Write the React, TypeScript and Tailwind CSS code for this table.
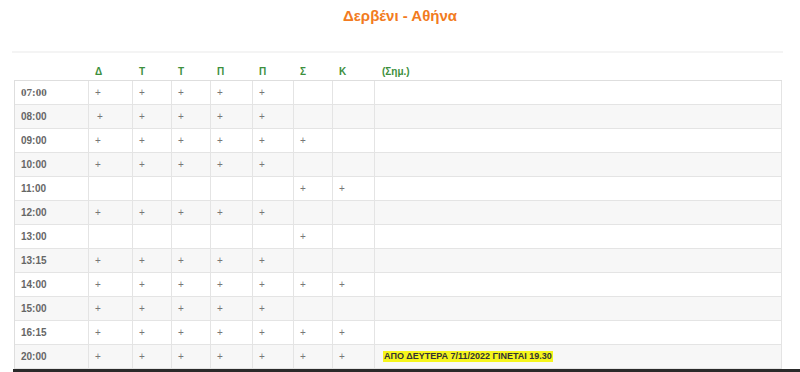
import React from 'react';

const days = ['Δ', 'Τ', 'Τ', 'Π', 'Π', 'Σ', 'Κ'];

const rows: { time: string; marks: boolean[]; note?: string }[] = [
  { time: '07:00', marks: [true, true, true, true, true, false, false] },
  { time: '08:00', marks: [true, true, true, true, true, false, false] },
  { time: '09:00', marks: [true, true, true, true, true, true, false] },
  { time: '10:00', marks: [true, true, true, true, true, false, false] },
  { time: '11:00', marks: [false, false, false, false, false, true, true] },
  { time: '12:00', marks: [true, true, true, true, true, false, false] },
  { time: '13:00', marks: [false, false, false, false, false, true, false] },
  { time: '13:15', marks: [true, true, true, true, true, false, false] },
  { time: '14:00', marks: [true, true, true, true, true, true, true] },
  { time: '15:00', marks: [true, true, true, true, true, false, false] },
  { time: '16:15', marks: [true, true, true, true, true, true, true] },
  {
    time: '20:00',
    marks: [true, true, true, true, true, true, true],
    note: 'ΑΠΟ ΔΕΥΤΕΡΑ 7/11/2022 ΓΙΝΕΤΑΙ 19.30',
  },
];

const gridCols = 'grid grid-cols-[74px_44px_39px_39px_42px_41px_39px_42px_1fr]';

const App: React.FC = () => {
  return (
    <div className="w-[800px] h-[372px] bg-white overflow-hidden font-['Liberation_Sans',Arial,sans-serif]">
      {/* Title */}
      <h1 className="pt-[7px] h-[30px] text-center text-[15px] font-bold text-[#f27b21] leading-[18px]">
        Δερβένι - Αθήνα
      </h1>

      <div className="mt-[21px] mx-[12px] w-[771px] h-[2px] bg-[#f4f4f4]" />

      {/* Header */}
      <div className={`${gridCols} ml-[14px] w-[768px] mt-[13px] h-[12px] items-end`}>
        <div />
        {days.map((d, i) => (
          <div key={i} className="pl-[7px] text-[10px] leading-[12px] font-bold text-[#3d8f3d]">
            {d}
          </div>
        ))}
        <div className="pl-[8px] text-[10px] leading-[12px] font-bold text-[#3d8f3d]">(Σημ.)</div>
      </div>

      {/* Table body */}
      <div className="ml-[14px] w-[768px] mt-[2px] border-t border-l border-[#dedede]">
        {rows.map((r, ri) => (
          <div
            key={r.time}
            className={`${gridCols} h-[24px] ${ri % 2 === 1 ? 'bg-[#f7f7f7]' : 'bg-white'}`}
          >
            <div
              className={`border-r border-b border-[#e4e4e4] pl-[6px] flex items-center text-[10px] font-bold text-[#666] ${
                ri === 0 ? "font-['Liberation_Serif',serif] text-[11px]" : ''
              }`}
            >
              {r.time}
            </div>
            {r.marks.map((m, i) => (
              <div
                key={i}
                className={`border-r border-b border-[#e4e4e4] flex items-center text-[10px] text-[#777] ${
                  ri === 1 && i === 0 ? 'pl-[8px]' : 'pl-[6px]'
                }`}
              >
                {m ? '+' : ''}
              </div>
            ))}
            <div className="border-r border-b border-[#e4e4e4] pl-[8px] flex items-center">
              {r.note && (
                <span className="bg-[#f5f51c] text-[9px] font-bold text-[#333] px-[1px] leading-[11px]">
                  {r.note}
                </span>
              )}
            </div>
          </div>
        ))}
      </div>

      <div className="ml-[13px] h-[4px] bg-[#2a2a2a]" />
    </div>
  );
};

export default App;
